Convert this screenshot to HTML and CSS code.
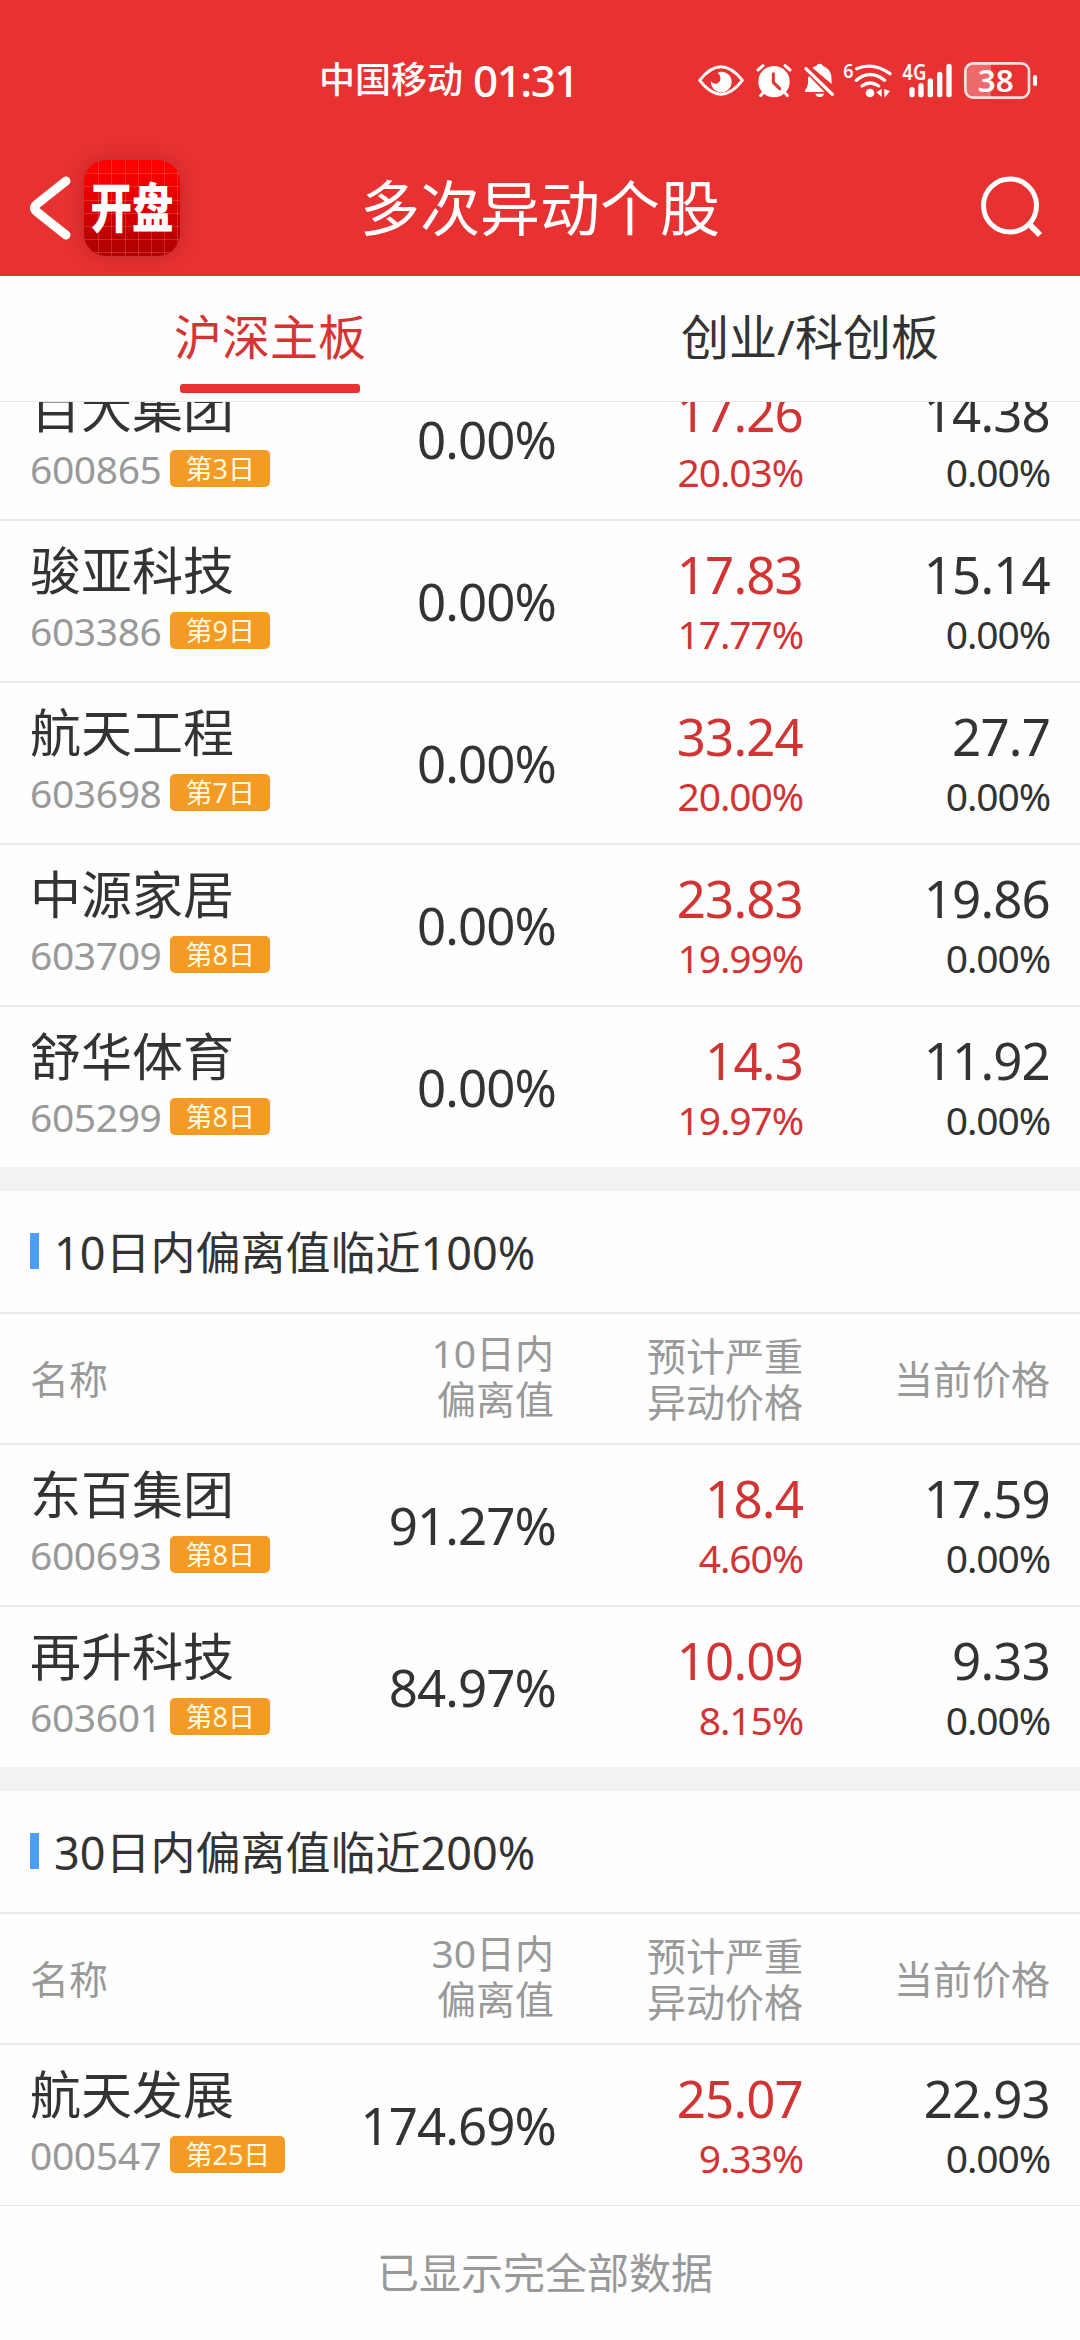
FILE: index.html
```html
<!DOCTYPE html>
<html lang="zh-CN">
  <head>
    <meta charset="UTF-8" />
    <meta name="viewport" content="width=device-width, initial-scale=1.0" />
    <title>多次异动个股</title>
    <link rel="stylesheet" href="styles.css">
  </head>
  <body>
    <header class="header">
      <div class="status-bar">
        <span class="carrier">中国移动</span>
        <span class="time">01:31</span>
        <div class="status-icons">
          <svg class="icon-eye" viewBox="48 60 144 120">
            <path d="M56 121 Q120 40 184 121 Q120 204 56 121 Z" fill="none" stroke="#fff" stroke-width="9" stroke-linejoin="round" />
            <path d="M121 95 A31 31 0 1 1 90 123 C96 134 112 134 117 122 C121 112 116 103 110 99 Q115 95 121 95 Z" fill="#fff" />
          </svg>
          <svg class="icon-alarm" viewBox="222 60 114 120">
            <circle cx="279" cy="125" r="47" fill="#fff" />
            <path d="M231 90 L246 77 M327 90 L312 77 M247 157 L239 167 M311 157 L319 167" stroke="#fff" stroke-width="9" stroke-linecap="round" />
            <path d="M277 101 V127 L296 146" fill="none" stroke="#e83131" stroke-width="9" stroke-linecap="round" stroke-linejoin="round" />
          </svg>
          <svg class="icon-bell" viewBox="363 60 102 120">
            <path d="M374 156 Q369 156 372 151 Q380 144 381 130 V114 L384 108 L431 156 Z M394 83 Q401 79 406 78 Q408 71 416 71 Q424 71 426 78 Q446 85 451 107 L452 132 Z M403 161 H429 Q426 171 416 171 Q406 171 403 161 Z" fill="#fff" />
            <path d="M375 86 L454 163" stroke="#fff" stroke-width="10" stroke-linecap="round" />
          </svg>
          <svg class="icon-wifi" viewBox="486 60 150 120">
            <text x="487" y="114" class="icon-text" font-size="60" textLength="31" lengthAdjust="spacingAndGlyphs">6</text>
            <path d="M527 86 Q577 65 627 101 M526 121 Q567 86 611 121 M543 138 Q567 120 593 138" fill="none" stroke="#fff" stroke-width="10" stroke-linecap="round" />
            <circle cx="567" cy="159" r="13" fill="#fff" />
            <path d="M602 147 V171 L586 157 Z M609 147 L627 153 L611 173 Z" fill="#fff" />
          </svg>
          <svg class="icon-signal" viewBox="660 60 156 120">
            <text x="664" y="120" class="icon-text" font-size="64" textLength="72" lengthAdjust="spacingAndGlyphs">4G</text>
            <path d="M693 149 V164 M720 137 V164 M748 123 V164 M776 103 V164 M804 79 V164" stroke="#fff" stroke-width="16" stroke-linecap="round" />
          </svg>
          <svg class="icon-battery" viewBox="846 60 225 120">
            <path d="M930 71 H876 Q854 71 854 92 V151 Q854 172 876 172 H930 Z" fill="#ef6a6a" />
            <rect x="853" y="70" width="191" height="103" rx="23" fill="none" stroke="#fff" stroke-opacity=".85" stroke-width="8" />
            <rect x="1056" y="105" width="12" height="33" rx="5" fill="#fff" />
            <text x="890" y="155" class="icon-text" font-size="94" textLength="108" lengthAdjust="spacingAndGlyphs">38</text>
          </svg>
        </div>
      </div>
      <div class="nav-bar">
        <div class="nav-left">
          <svg class="back" viewBox="0 0 44 64"><path d="M38 5 L9 28 Q4 32 9 36 L38 59" fill="none" stroke="#fff" stroke-width="9" stroke-linecap="round" stroke-linejoin="round" /></svg>
          <div class="logo"><span>开盘</span></div>
        </div>
        <h1>多次异动个股</h1>
        <svg class="search" viewBox="0 0 64 64"><circle cx="31" cy="30.5" r="26.5" fill="none" stroke="#fff" stroke-width="5" /><path d="M50 49 L61 60" stroke="#fff" stroke-width="6" /></svg>
      </div>
    </header>

    <nav class="tabs">
      <div class="tab active">沪深主板</div>
      <div class="tab">创业/科创板</div>
    </nav>

    <main class="list">
      <section class="group group-scrolled">
        <div class="row">
          <div class="stock"><div class="name">百大集团</div><div class="code">600865<span class="badge">第3日</span></div></div>
          <div class="offset">0.00%</div>
          <div class="price up"><b>17.26</b><i>20.03%</i></div>
          <div class="price"><b>14.38</b><i>0.00%</i></div>
        </div>
        <div class="row">
          <div class="stock"><div class="name">骏亚科技</div><div class="code">603386<span class="badge">第9日</span></div></div>
          <div class="offset">0.00%</div>
          <div class="price up"><b>17.83</b><i>17.77%</i></div>
          <div class="price"><b>15.14</b><i>0.00%</i></div>
        </div>
        <div class="row">
          <div class="stock"><div class="name">航天工程</div><div class="code">603698<span class="badge">第7日</span></div></div>
          <div class="offset">0.00%</div>
          <div class="price up"><b>33.24</b><i>20.00%</i></div>
          <div class="price"><b>27.7</b><i>0.00%</i></div>
        </div>
        <div class="row">
          <div class="stock"><div class="name">中源家居</div><div class="code">603709<span class="badge">第8日</span></div></div>
          <div class="offset">0.00%</div>
          <div class="price up"><b>23.83</b><i>19.99%</i></div>
          <div class="price"><b>19.86</b><i>0.00%</i></div>
        </div>
        <div class="row">
          <div class="stock"><div class="name">舒华体育</div><div class="code">605299<span class="badge">第8日</span></div></div>
          <div class="offset">0.00%</div>
          <div class="price up"><b>14.3</b><i>19.97%</i></div>
          <div class="price"><b>11.92</b><i>0.00%</i></div>
        </div>
      </section>

      <section class="group">
        <h2>10日内偏离值临近100%</h2>
        <div class="row-head">
          <div>名称</div>
          <div class="head-offset">10日内<br />偏离值</div>
          <div>预计严重<br />异动价格</div>
          <div>当前价格</div>
        </div>
        <div class="row">
          <div class="stock"><div class="name">东百集团</div><div class="code">600693<span class="badge">第8日</span></div></div>
          <div class="offset">91.27%</div>
          <div class="price up"><b>18.4</b><i>4.60%</i></div>
          <div class="price"><b>17.59</b><i>0.00%</i></div>
        </div>
        <div class="row">
          <div class="stock"><div class="name">再升科技</div><div class="code">603601<span class="badge">第8日</span></div></div>
          <div class="offset">84.97%</div>
          <div class="price up"><b>10.09</b><i>8.15%</i></div>
          <div class="price"><b>9.33</b><i>0.00%</i></div>
        </div>
      </section>

      <section class="group">
        <h2>30日内偏离值临近200%</h2>
        <div class="row-head">
          <div>名称</div>
          <div class="head-offset">30日内<br />偏离值</div>
          <div>预计严重<br />异动价格</div>
          <div>当前价格</div>
        </div>
        <div class="row">
          <div class="stock"><div class="name">航天发展</div><div class="code">000547<span class="badge">第25日</span></div></div>
          <div class="offset">174.69%</div>
          <div class="price up"><b>25.07</b><i>9.33%</i></div>
          <div class="price"><b>22.93</b><i>0.00%</i></div>
        </div>
      </section>
    </main>

    <footer class="footer">已显示完全部数据</footer>
  </body>
</html>
```
FILE: styles.css
```css
* {
  box-sizing: border-box;
}

body {
  margin: 0;
  width: 1080px;
  height: 2340px;
  overflow: hidden;
  background-color: #fefefe;
  color: #333;
  font-family: "Noto Sans", "Noto Sans CJK SC", sans-serif;
}

h1,
h2 {
  margin: 0;
  font-weight: 400;
}

.header {
  height: 276px;
  background-color: #e83131;
  color: #fff;
}

/* Status bar */
.status-bar {
  display: flex;
  align-items: center;
  height: 140px;
  padding: 20px 42px 0 319px;
  line-height: 60px;
}

.carrier {
  font-size: 36px;
  font-weight: 500;
}

.time {
  margin-left: 10px;
  font-size: 44px;
  font-weight: 500;
  letter-spacing: -1.5px;
}

.status-icons {
  display: flex;
  margin-left: auto;
}

.status-icons svg {
  height: 40px;
  overflow: visible;
}

.icon-text {
  font-family: "Noto Sans", sans-serif;
  font-weight: 600;
  fill: #fff;
}

.icon-eye {
  width: 48px;
  margin-right: 10px;
}

.icon-alarm {
  width: 38px;
  margin-right: 9px;
}

.icon-bell {
  width: 34px;
  margin-right: 7px;
}

.icon-wifi {
  width: 50px;
  margin-right: 8px;
}

.icon-signal {
  width: 52px;
  margin-right: 10px;
}

.icon-battery {
  width: 75px;
}

/* Navigation */
.nav-bar {
  display: grid;
  grid-template-columns: 1fr auto 1fr;
  align-items: center;
  height: 136px;
  padding: 0 37px 0 28px;
}

.nav-left {
  display: flex;
  align-items: center;
  gap: 12px;
}

.back {
  width: 44px;
  height: 64px;
}

.logo {
  display: flex;
  align-items: center;
  justify-content: center;
  width: 96px;
  height: 96px;
  border-radius: 22px;
  background:
    repeating-linear-gradient(90deg, transparent 0 12.2px, rgba(255, 255, 255, 0.16) 12.2px 13.2px) 2px 0,
    repeating-linear-gradient(transparent 0 12.2px, rgba(255, 255, 255, 0.16) 12.2px 13.2px) 0 1px,
    linear-gradient(#ff0000 10%, #b40000 90%);
  box-shadow: 0 0 18px rgba(110, 20, 20, 0.35);
}

.logo span {
  font-size: 50px;
  font-weight: 900;
  line-height: 96px;
  white-space: nowrap;
  transform: scale(0.83, 1.06);
}

h1 {
  padding-left: 9px;
  font-size: 60px;
  line-height: 136px;
}

.search {
  justify-self: end;
  width: 64px;
  height: 64px;
  margin-top: -3px;
}

/* Tabs */
.tabs {
  display: flex;
  height: 126px;
  border-bottom: 1px solid #e6e6e6;
}

.tab {
  flex: 1;
  padding-top: 24px;
  font-size: 48px;
  line-height: 73px;
  text-align: center;
}

.tab.active {
  color: #d83333;
}

.tab.active::after {
  content: "";
  display: block;
  width: 180px;
  height: 9px;
  margin: 11px auto 0;
  border-radius: 3px;
  background-color: #e83131;
}

/* List */
.list {
  overflow: hidden;
}

.group + .group {
  border-top: 24px solid #f2f2f2;
}

/* first group is scrolled partly under the tabs */
.group-scrolled {
  margin-top: -43px;
}

h2 {
  display: flex;
  align-items: center;
  height: 123px;
  padding: 0 0 2px 30px;
  border-bottom: 2px solid #e9e9e9;
  font-size: 45px;
}

h2::before {
  content: "";
  width: 9px;
  height: 36px;
  margin: 1px 15px 0 0;
  background-color: #4c9eff;
}

.row,
.row-head {
  display: grid;
  grid-template-columns: 1fr 250px 247px 247px;
  padding: 0 30px;
  border-bottom: 2px solid #e9e9e9;
  text-align: right;
}

.row {
  height: 162px;
}

.row:last-child {
  height: 160px;
  border-bottom: none;
}

.group:last-child .row:last-child {
  height: 161px;
  border-bottom: 1px solid #e9e9e9;
}

.row-head {
  align-items: center;
  height: 131px;
  color: #999;
  font-size: 39px;
  line-height: 46px;
}

.row-head div:first-child {
  text-align: left;
}

.head-offset {
  padding: 0 2px 6px 0;
}

.stock {
  padding-top: 19px;
  text-align: left;
  white-space: nowrap;
}

.name {
  font-size: 51px;
  line-height: 60px;
}

.code {
  display: flex;
  align-items: center;
  height: 61px;
  color: #999;
  font-size: 39px;
  letter-spacing: -0.4px;
}

.badge {
  height: 37px;
  margin-left: 9px;
  padding: 0 15px;
  border-radius: 5px;
  background-color: #f59a23;
  color: #fffbe0;
  font-size: 27px;
  letter-spacing: 0;
  line-height: 37px;
}

.offset {
  font-size: 51px;
  line-height: 160px;
  letter-spacing: -0.9px;
}

.price {
  padding-top: 23px;
}

.price b,
.price i {
  display: block;
  font-size: 51px;
  font-style: normal;
  font-weight: 400;
  line-height: 60px;
  letter-spacing: -0.8px;
}

.price i {
  font-size: 39px;
  letter-spacing: -1.1px;
}

.up {
  color: #d23434;
}

.footer {
  padding-left: 10px;
  color: #999;
  font-size: 42px;
  line-height: 134px;
  text-align: center;
}
```
